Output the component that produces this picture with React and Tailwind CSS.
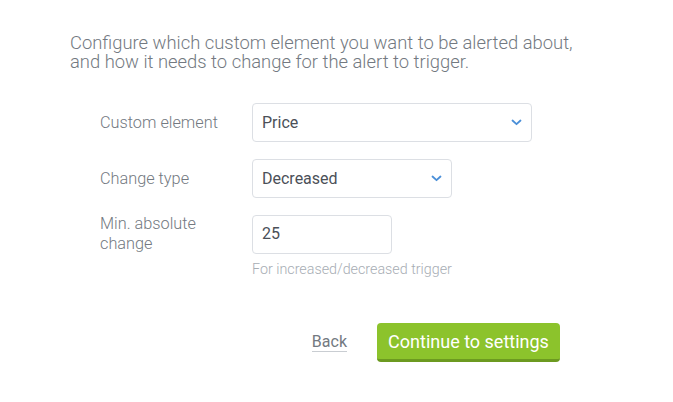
import React from 'react';

function Chevron() {
  return (
    <svg width="11" height="7" viewBox="0 0 11 7" className="shrink-0">
      <path d="M1.5 1.5 L5.5 5.2 L9.5 1.5" fill="none" stroke="#4a8fd8" strokeWidth="1.8" strokeLinecap="round" strokeLinejoin="round" />
    </svg>
  );
}

function Select({ value, width }) {
  return (
    <div className={`flex items-center justify-between h-[39px] rounded-[4px] border border-[#dcdfe4] bg-white pl-[9px] pr-[9px] ${width}`}>
      <span className="text-[16px] text-[#4b5058]">{value}</span>
      <Chevron />
    </div>
  );
}

function Row({ label, children }) {
  return (
    <div className="flex items-center">
      <div className="w-[152px] text-[16.3px] font-light leading-[20px] text-[#737981]">{label}</div>
      {children}
    </div>
  );
}

export default function App() {
  return (
    <div className="w-[673px] h-[402px] bg-white font-['Roboto',_sans-serif]">
      <div className="pt-[33px] pl-[70px]">
        <p className="text-[18.4px] font-light leading-[19px] text-[#737981]">
          Configure which custom element you want to be alerted about,
          <br />
          and how it needs to change for the alert to trigger.
        </p>

        <div className="mt-[32px] pl-[30px] flex flex-col">
          <Row label="Custom element">
            <Select value="Price" width="w-[280px]" />
          </Row>
          <div className="mt-[17px]">
            <Row label="Change type">
              <Select value="Decreased" width="w-[200px]" />
            </Row>
          </div>
          <div className="mt-[16px]">
            <Row label={<>Min. absolute<br />change</>}>
              <div className="flex items-center h-[39px] w-[140px] rounded-[4px] border border-[#dcdfe4] pl-[9px] text-[16px] text-[#4b5058]">
                25
              </div>
            </Row>
          </div>
          <div className="pl-[152px] mt-[7px] text-[14.3px] font-light leading-[16px] text-[#a7adb4]">
            For increased/decreased trigger
          </div>
        </div>

        <div className="mt-[46px] flex items-center justify-end w-[490px]">
          <a className="text-[16px] text-[#737981] border-b border-[#c9cdd2] leading-[18px] mr-[30px]">Back</a>
          <button className="h-[39px] w-[183px] rounded-[4px] bg-[#8cc32c] border-b-[3px] border-[#6c9a20] text-white text-[18px] leading-none pt-[2px]">
            Continue to settings
          </button>
        </div>
      </div>
    </div>
  );
}
